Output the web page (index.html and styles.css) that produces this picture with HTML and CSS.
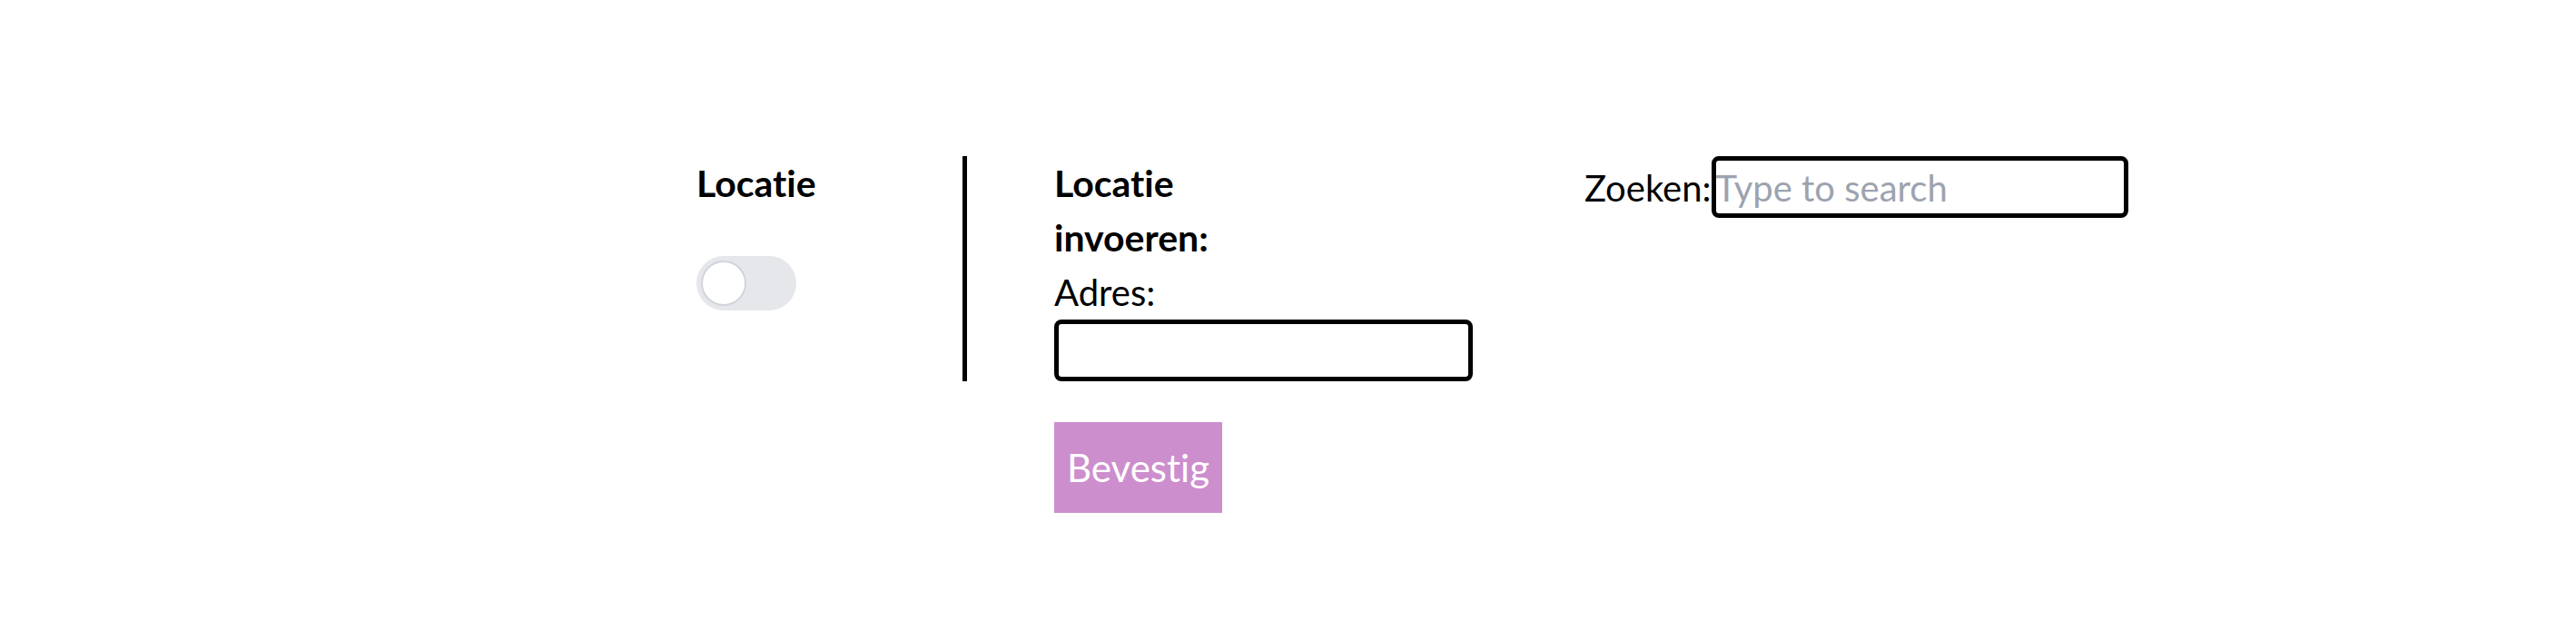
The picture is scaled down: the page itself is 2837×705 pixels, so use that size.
FILE: index.html
```html
<!DOCTYPE html>
<html lang="nl">
<head>
<meta charset="utf-8">
<title>Locatie</title>
<link rel="stylesheet" href="styles.css">
</head>
<body>
<main class="page">
  <section class="settings">
    <div class="toggle-col">
      <h2 class="title">Locatie</h2>
      <span class="switch" role="switch" aria-checked="false"><span class="knob"></span></span>
    </div>
    <div class="fields">
      <h2 class="title title--narrow">Locatie invoeren:</h2>
      <label class="field-label" for="adres">Adres:</label>
      <input id="adres" class="text-input" type="text">
    </div>
    <button class="confirm" type="button">Bevestig</button>
  </section>
  <div class="search">
    <label class="search-label" for="zoek">Zoeken:</label>
    <input id="zoek" class="text-input text-input--search" type="text" placeholder="Type to search">
  </div>
</main>
</body>
</html>
```
FILE: styles.css
```css
body {
  margin: 0;
  background: #fff;
  color: #000;
  font-family: Lato, "Segoe UI", "Noto Sans", sans-serif;
  font-size: 40px;
  line-height: 60px;
  font-variant-ligatures: none;
}

.page {
  display: flex;
  align-items: flex-start;
  gap: 123px;
  padding: 172px 0 0 767px;
}

.settings {
  display: grid;
  grid-template-columns: auto auto;
  row-gap: 45px;
}

.toggle-col {
  width: 293px;
  border-right: 5px solid #000;
}

.title {
  margin: 0;
  font-size: 41px;
  font-weight: 700;
  line-height: 60px;
}

.title--narrow {
  width: 240px;
}

.switch {
  display: flex;
  align-items: center;
  width: 110px;
  height: 60px;
  margin-top: 50px;
  padding: 0 5px;
  box-sizing: border-box;
  border-radius: 30px;
  background: #e5e7eb;
}

.knob {
  width: 50px;
  height: 50px;
  box-sizing: border-box;
  border-radius: 50%;
  border: 2px solid #d1d5db;
  background: #fff;
}

.fields {
  display: flex;
  flex-direction: column;
  align-items: flex-start;
  padding-left: 96px;
}

.field-label {
  display: block;
}

.text-input {
  width: 461px;
  height: 68px;
  box-sizing: border-box;
  margin: 0;
  padding: 2px 0 0;
  border: 5px solid #000;
  border-radius: 8px;
  background: #fff;
  color: #000;
  font-family: inherit;
  font-size: 40px;
  font-variant-ligatures: none;
  outline: none;
}

.text-input--search {
  width: 459px;
}

.text-input::placeholder {
  color: #9ca3af;
}

.confirm {
  grid-column: 2;
  justify-self: start;
  margin-left: 96px;
  padding: 20px 14px;
  border: 0;
  border-radius: 0;
  background: #cd8ecd;
  color: #fff;
  font-family: inherit;
  font-size: 42px;
  line-height: 60px;
  font-variant-ligatures: none;
}

.search {
  display: flex;
  align-items: baseline;
}

.search-label {
  display: block;
}
```
